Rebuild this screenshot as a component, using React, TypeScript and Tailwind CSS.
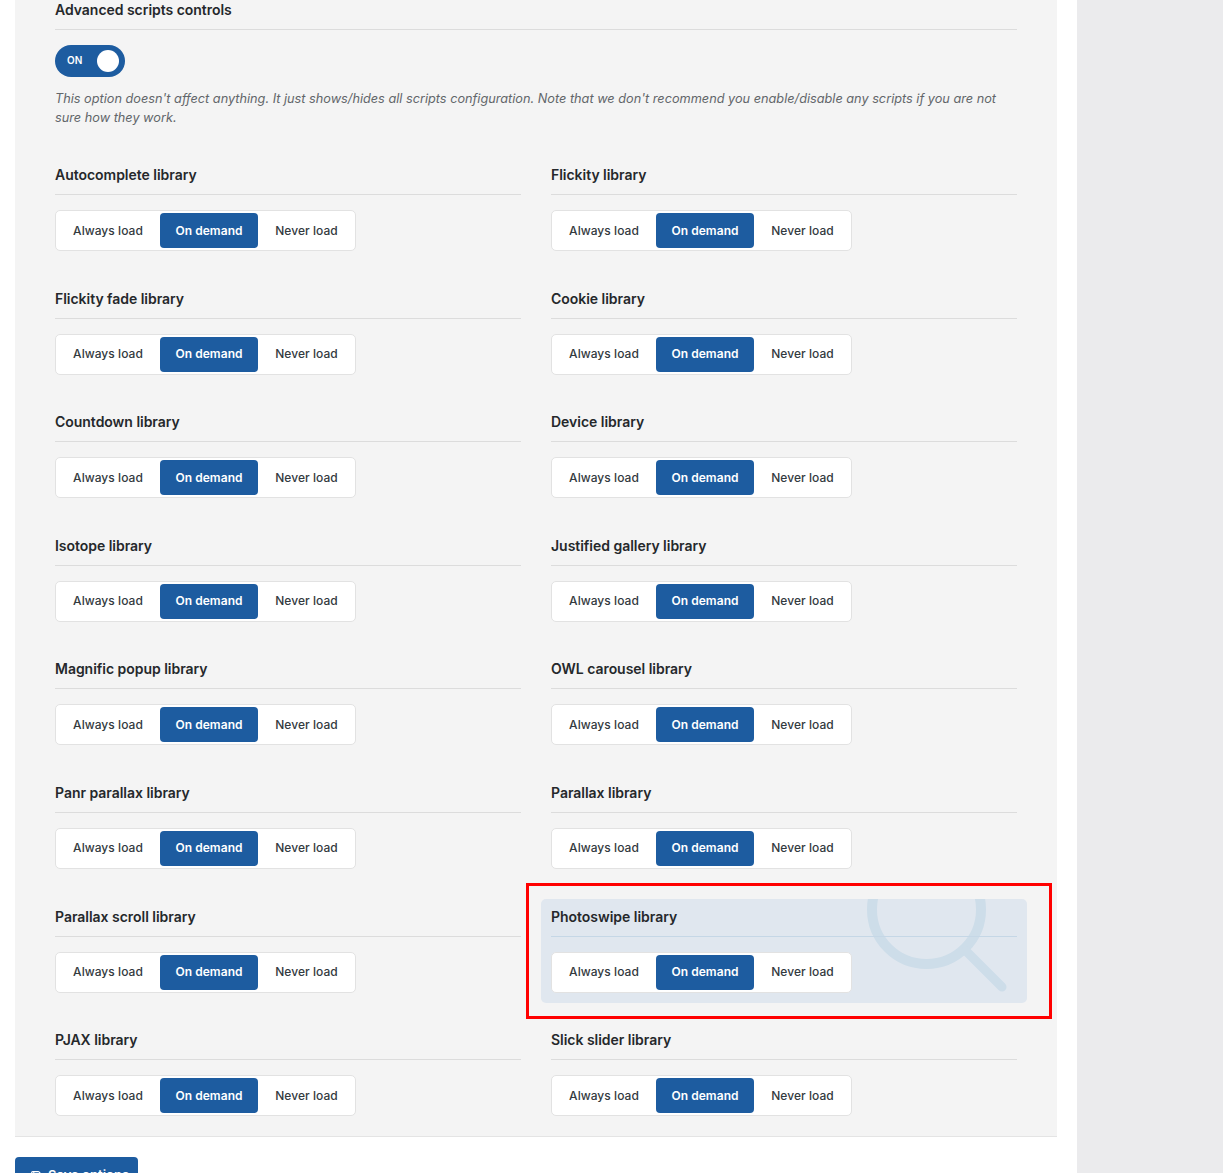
import { Save } from "lucide-react";

const libraries = [
  "Autocomplete library",
  "Flickity library",
  "Flickity fade library",
  "Cookie library",
  "Countdown library",
  "Device library",
  "Isotope library",
  "Justified gallery library",
  "Magnific popup library",
  "OWL carousel library",
  "Panr parallax library",
  "Parallax library",
  "Parallax scroll library",
  "Photoswipe library",
  "PJAX library",
  "Slick slider library",
];

function LoadSwitch() {
  return (
    <div className="flex h-[41px] w-[301px] items-center rounded-[5px] border border-[#e2e2e2] bg-white text-[12px] font-medium tracking-[0.05px] text-[#333a40]">
      <span className="flex h-[35px] w-[104px] items-center justify-center">Always load</span>
      <span className="flex h-[35px] w-[98px] items-center justify-center rounded-[4px] bg-[#1d5ca0] font-semibold text-white">On demand</span>
      <span className="flex h-[35px] w-[97px] items-center justify-center">Never load</span>
    </div>
  );
}

function LibraryOption({ name }: { name: string }) {
  const active = name === "Photoswipe library";
  return (
    <div className={active ? "relative h-[104px] overflow-hidden rounded-[5px] bg-[#e0e7ef] p-[10px]" : "h-[104px] rounded-[5px] p-[10px]"}>
      {active && (
        <svg className="absolute top-0 left-0" width="486" height="104" viewBox="0 0 486 104" fill="none" stroke="#cddde9" strokeLinecap="round">
          <circle cx="385.5" cy="10.5" r="54.5" strokeWidth="10" />
          <path d="M425 52 L461 88" strokeWidth="9" />
        </svg>
      )}
      <h3 className={active ? "relative h-[28px] border-b border-[#c5d7e6] text-[14px] leading-[15px] font-semibold tracking-[-0.03px] text-[#25282b]" : "h-[28px] border-b border-[#dcdcdc] text-[14px] leading-[15px] font-semibold tracking-[-0.03px] text-[#25282b]"}>
        {name}
      </h3>
      <div className="relative mt-[15px]">
        <LoadSwitch />
      </div>
    </div>
  );
}

export default function App() {
  return (
    <div className="flex h-[1173px] overflow-hidden bg-white font-['Inter','Liberation_Sans',sans-serif]">
      <div className="w-[1077px] shrink-0 pl-[15px] pr-[20px]">
        <div className="border-b border-[#e4e4e4] bg-[#f4f4f4] px-[30px] pb-[10px]">
          <section className="px-[10px]">
            <h2 className="h-[30px] border-b border-[#dcdcdc] pt-[1px] text-[14px] leading-[17px] font-semibold tracking-[-0.03px] text-[#25282b]">Advanced scripts controls</h2>
            <div className="mt-[15px] flex h-[32px] w-[70px] items-center justify-between rounded-full bg-[#1d5ca0] pr-[6px] pl-[12px]">
              <span className="pb-[1px] text-[10px] font-semibold text-white">ON</span>
              <span className="h-[22px] w-[22px] rounded-full bg-white" />
            </div>
            <p className="mt-[12px] text-[12.72px] leading-[19px] text-[#62666a] italic">
              This option doesn't affect anything. It just shows/hides all scripts configuration. Note that we don't recommend you enable/disable any scripts if you are not sure how they work.
            </p>
          </section>
          <div className="mt-[30px] grid grid-cols-2 gap-x-[10px] gap-y-[19.6px]">
            {libraries.map((name) => (
              <LibraryOption key={name} name={name} />
            ))}
          </div>
        </div>
        <button className="mt-[20px] flex h-[38px] w-[123px] items-center gap-[5px] rounded-[4px] bg-[#1d5ca0] pl-[15px] text-[13px] font-semibold text-white">
          <Save size={13} />
          Save options
        </button>
      </div>
      <div className="flex-1 bg-[#ebebed]" />
      {/* red marker round the highlighted option */}
      <div className="absolute top-[883px] left-[526px] h-[136px] w-[526px] border-[3px] border-[#ff0000]" />
    </div>
  );
}
